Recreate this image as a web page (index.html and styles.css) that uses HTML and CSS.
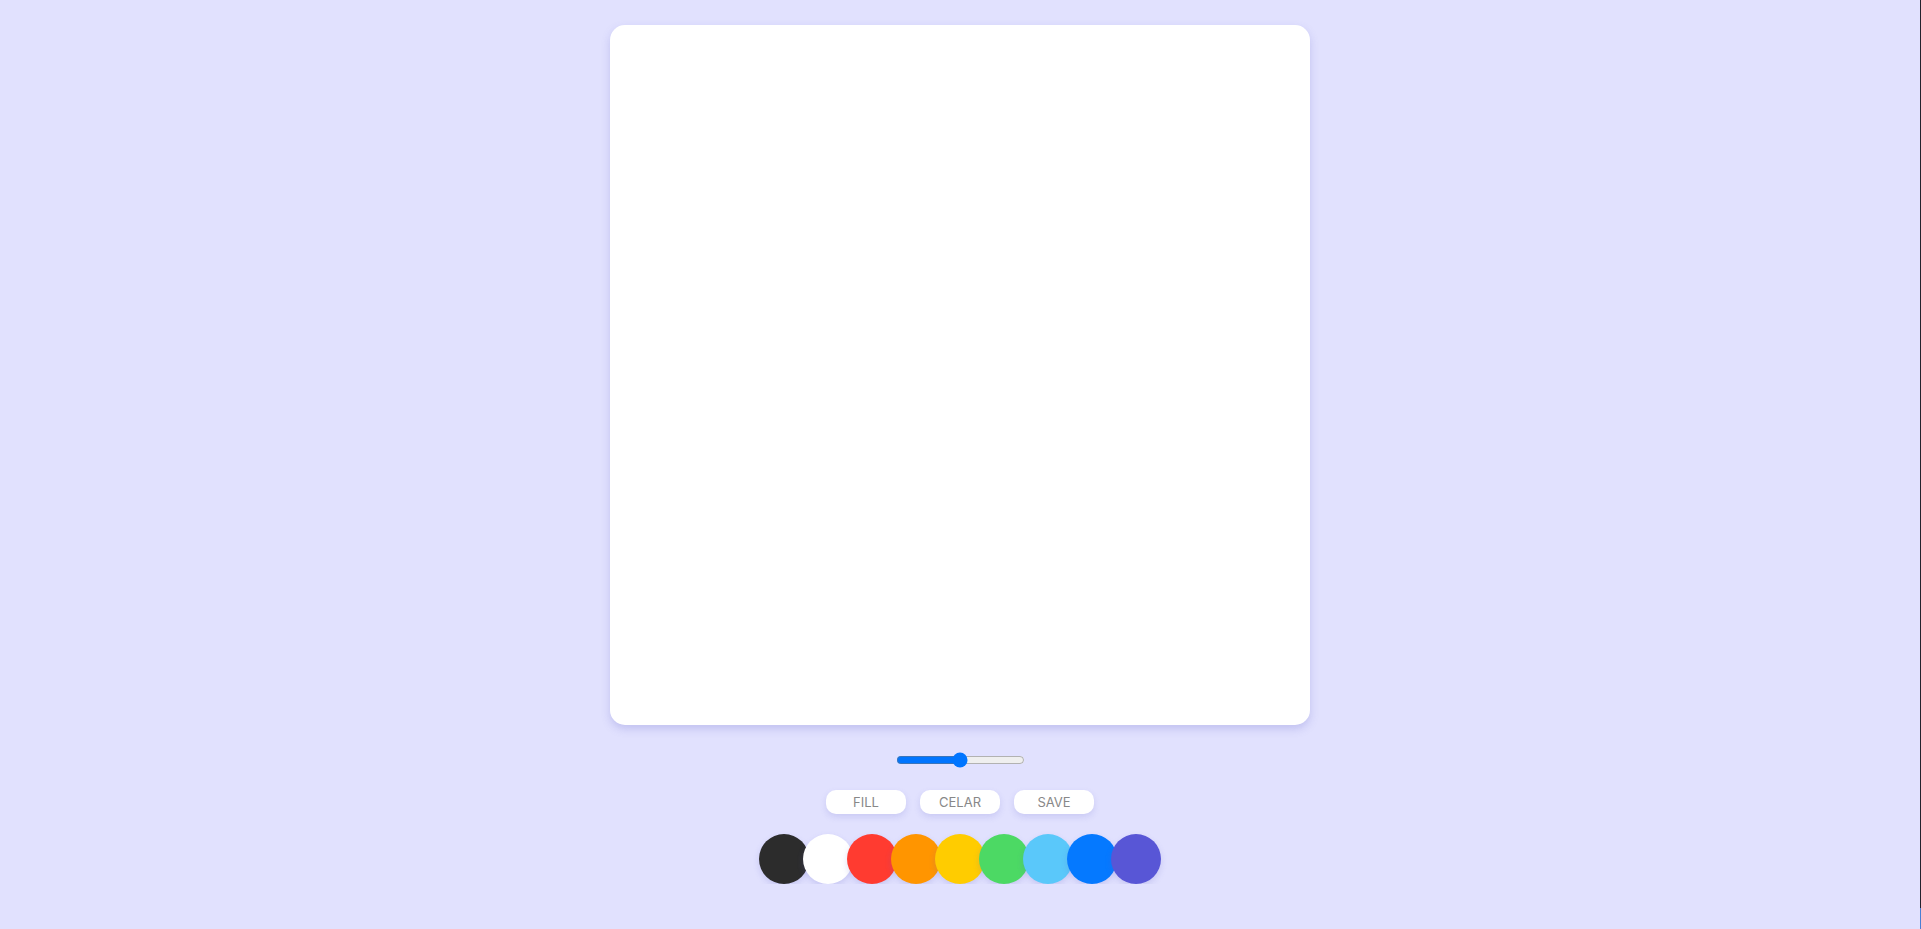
FILE: index.html
```html
<!DOCTYPE html>
<html>
<head>
<meta charset="utf-8">
<link rel="stylesheet" href="styles.css">
</head>
<body>
<main class="app">
  <canvas class="board" width="700" height="700"></canvas>
  <input class="size" type="range" min="0" max="100" value="50">
  <div class="actions">
    <button class="btn">FILL</button>
    <button class="btn">CELAR</button>
    <button class="btn">SAVE</button>
  </div>
  <div class="palette">
    <div class="swatch" style="background:#2c2c2c"></div>
    <div class="swatch" style="background:#ffffff"></div>
    <div class="swatch" style="background:#ff3b30"></div>
    <div class="swatch" style="background:#ff9500"></div>
    <div class="swatch" style="background:#ffcc00"></div>
    <div class="swatch" style="background:#4cd964"></div>
    <div class="swatch" style="background:#5ac8fa"></div>
    <div class="swatch" style="background:#0579ff"></div>
    <div class="swatch" style="background:#5856d6"></div>
  </div>
</main>
</body>
</html>
```
FILE: styles.css
```css
html {
  margin: 0;
  padding: 0;
  background: #e1e1fe;
  height: 100%;
  box-sizing: border-box;
  border-right: 1px solid #22222e;
  border-image: linear-gradient(to bottom, #22222e 0, #22222e 907px, #4a7fd4 907px, #4a7fd4 100%) 1;
}
body {
  margin: 0;
  padding: 0;
  font-family: Inter, "Liberation Sans", sans-serif;
}
.app {
  display: flex;
  flex-direction: column;
  align-items: center;
  padding-top: 25px;
}
.board {
  display: block;
  width: 700px;
  height: 700px;
  background: #ffffff;
  border-radius: 15px;
  box-shadow: 0 4px 8px rgba(100, 100, 200, 0.25);
}
.size {
  margin: 27px 0 0 0;
  width: 129px;
  height: 16px;
  accent-color: #0075ff;
}
.actions {
  display: flex;
  gap: 14px;
  margin-top: 22px;
}
.btn {
  width: 80px;
  height: 24px;
  border: none;
  border-radius: 10px;
  background: #ffffff;
  color: #888888;
  font-family: Inter, "Liberation Sans", sans-serif;
  font-size: 13px;
  padding: 0;
  box-shadow: 0 3px 6px rgba(100, 100, 200, 0.18);
}
.palette {
  display: flex;
  margin-top: 20px;
}
.swatch {
  width: 50px;
  height: 50px;
  border-radius: 50%;
  margin: 0 -3px;
  box-shadow: 0 3px 6px rgba(100, 100, 200, 0.2);
}
```
